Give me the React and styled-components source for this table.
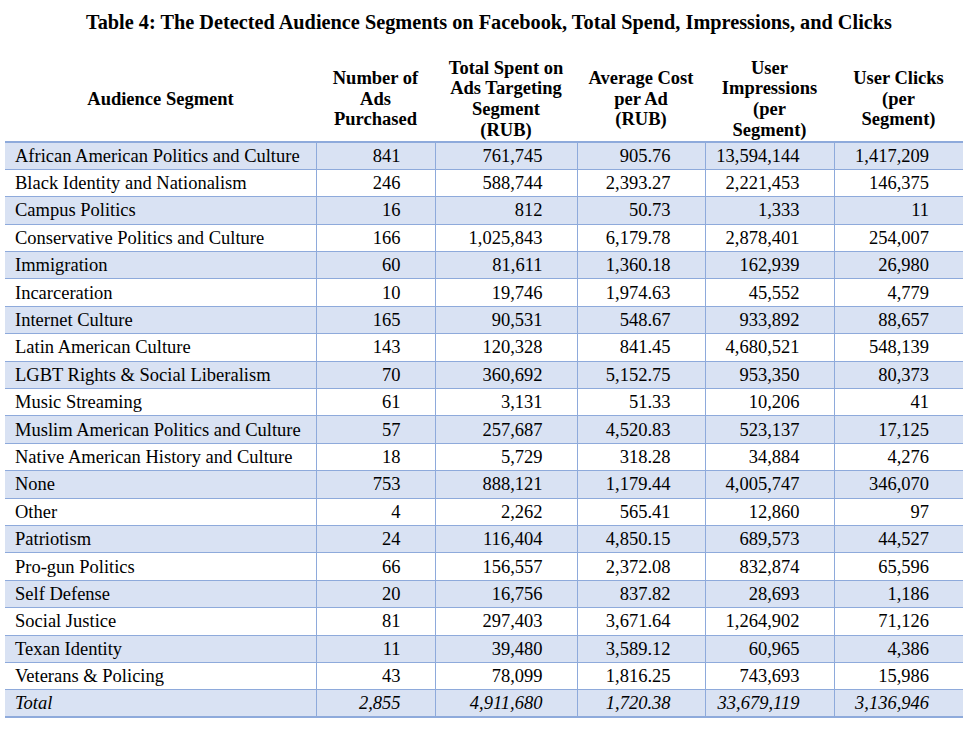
import React from "react";
import styled, { createGlobalStyle } from "styled-components";

const rows = [
	["African American Politics and Culture", "841", "761,745", "905.76", "13,594,144", "1,417,209"],
	["Black Identity and Nationalism", "246", "588,744", "2,393.27", "2,221,453", "146,375"],
	["Campus Politics", "16", "812", "50.73", "1,333", "11"],
	["Conservative Politics and Culture", "166", "1,025,843", "6,179.78", "2,878,401", "254,007"],
	["Immigration", "60", "81,611", "1,360.18", "162,939", "26,980"],
	["Incarceration", "10", "19,746", "1,974.63", "45,552", "4,779"],
	["Internet Culture", "165", "90,531", "548.67", "933,892", "88,657"],
	["Latin American Culture", "143", "120,328", "841.45", "4,680,521", "548,139"],
	["LGBT Rights & Social Liberalism", "70", "360,692", "5,152.75", "953,350", "80,373"],
	["Music Streaming", "61", "3,131", "51.33", "10,206", "41"],
	["Muslim American Politics and Culture", "57", "257,687", "4,520.83", "523,137", "17,125"],
	["Native American History and Culture", "18", "5,729", "318.28", "34,884", "4,276"],
	["None", "753", "888,121", "1,179.44", "4,005,747", "346,070"],
	["Other", "4", "2,262", "565.41", "12,860", "97"],
	["Patriotism", "24", "116,404", "4,850.15", "689,573", "44,527"],
	["Pro-gun Politics", "66", "156,557", "2,372.08", "832,874", "65,596"],
	["Self Defense", "20", "16,756", "837.82", "28,693", "1,186"],
	["Social Justice", "81", "297,403", "3,671.64", "1,264,902", "71,126"],
	["Texan Identity", "11", "39,480", "3,589.12", "60,965", "4,386"],
	["Veterans & Policing", "43", "78,099", "1,816.25", "743,693", "15,986"],
];

const total = ["Total", "2,855", "4,911,680", "1,720.38", "33,679,119", "3,136,946"];

// header labels, one entry per line
const headers = [
	["Audience Segment"],
	["Number of", "Ads", "Purchased"],
	["Total Spent on", "Ads Targeting", "Segment", "(RUB)"],
	["Average Cost", "per Ad", "(RUB)"],
	["User", "Impressions", "(per", "Segment)"],
	["User Clicks", "(per", "Segment)"],
];

const widths = [311, 119, 142, 128, 129, 129];

const App = () => {
	return (
		<Page>
			<GlobalStyle />
			<Title>
				Table 4: The Detected Audience Segments on Facebook, Total Spend, Impressions, and Clicks
			</Title>
			<Table>
				<colgroup>
					{widths.map((w, i) => (
						<col key={i} style={{ width: w }} />
					))}
				</colgroup>
				<thead>
					<tr>
						{headers.map((lines, i) => (
							<HeadCell key={i}>
								{lines.map((l, j) => (
									<div key={j}>{l}</div>
								))}
							</HeadCell>
						))}
					</tr>
				</thead>
				<tbody>
					{rows.map((row, i) => (
						<Row key={row[0]} $shaded={i % 2 === 0}>
							<NameCell>{row[0]}</NameCell>
							{row.slice(1).map((v, j) => (
								<NumCell key={j}>{v}</NumCell>
							))}
						</Row>
					))}
					<TotalRow $shaded>
						<NameCell>{total[0]}</NameCell>
						{total.slice(1).map((v, j) => (
							<NumCell key={j}>{v}</NumCell>
						))}
					</TotalRow>
				</tbody>
			</Table>
		</Page>
	);
};

const GlobalStyle = createGlobalStyle`
	body {
		margin: 0;
		background: #ffffff;
		font-family: "Liberation Serif", "Times New Roman", serif;
		color: #000000;
	}
`;

const Page = styled.div`
	width: 980px;
	height: 741px;
	padding: 9px 0 0 5px;
	box-sizing: border-box;
`;

const Title = styled.h1`
	margin: 0 0 22px 0;
	width: 968px;
	text-align: center;
	font-size: 20.3px;
	font-weight: 700;
	line-height: 26px;
`;

const Table = styled.table`
	width: 958px;
	border-collapse: collapse;
	table-layout: fixed;
	font-size: 18.5px;
`;

const HeadCell = styled.th`
	height: 84px;
	padding: 0 2px;
	vertical-align: middle;
	text-align: center;
	font-weight: 700;
	line-height: 20.7px;
	border-bottom: 2px solid #8eaadb;
`;

const Row = styled.tr`
	height: 27.4px;
	background: ${(p) => (p.$shaded ? "#d9e2f3" : "#ffffff")};
`;

const TotalRow = styled(Row)`
	font-style: italic;
	td {
		border-bottom: 2px solid #8eaadb;
	}
`;

const Cell = styled.td`
	padding: 0;
	border-bottom: 1px solid #8eaadb;
	border-left: 1px solid #8eaadb;
	white-space: nowrap;
	line-height: 20px;
	&:first-child {
		border-left: none;
	}
`;

const NameCell = styled(Cell)`
	padding-left: 10px;
	text-align: left;
`;

const NumCell = styled(Cell)`
	padding-right: 34px;
	text-align: right;
`;

export default App;
